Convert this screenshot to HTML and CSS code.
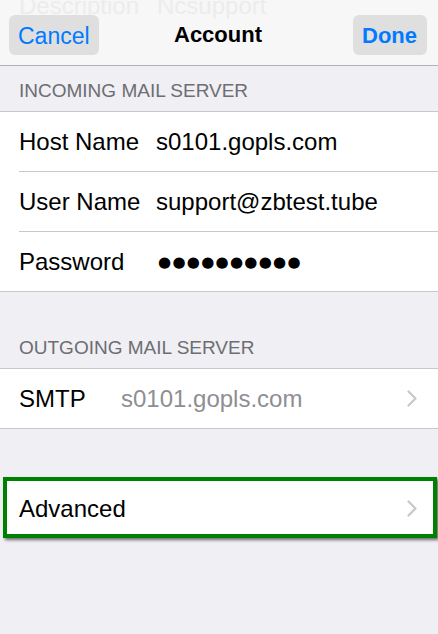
FILE: index.html
```html
<!DOCTYPE html>
<html>
<head>
<meta charset="utf-8">
<link rel="stylesheet" href="styles.css">
</head>
<body>
<div class="screen">
  <header class="nav">
    <div class="ghost"><span class="ghost-label">Description</span><span>Ncsupport</span></div>
    <div class="nav-bar">
      <button class="nav-btn nav-cancel">Cancel</button>
      <div class="nav-title">Account</div>
      <button class="nav-btn nav-done">Done</button>
    </div>
  </header>

  <div class="section-header">INCOMING MAIL SERVER</div>
  <div class="group">
    <div class="row"><span class="label">Host Name</span><span class="value">s0101.gopls.com</span></div>
    <div class="row"><span class="label">User Name</span><span class="value">support@zbtest.tube</span></div>
    <div class="row"><span class="label">Password</span><span class="value dots">●●●●●●●●●●</span></div>
  </div>

  <div class="section-header tall">OUTGOING MAIL SERVER</div>
  <div class="group">
    <div class="row row-link"><span class="label short">SMTP</span><span class="value muted">s0101.gopls.com</span>
      <svg class="chev" width="10" height="17" viewBox="0 0 10 17"><path d="M1.5 1.5 L8.5 8.5 L1.5 15.5" fill="none" stroke="#c7c7cc" stroke-width="2.2" stroke-linecap="round" stroke-linejoin="round"/></svg>
    </div>
  </div>

  <div class="advanced">
    <span class="adv-label">Advanced</span>
    <svg class="chev" width="10" height="17" viewBox="0 0 10 17"><path d="M1.5 1.5 L8.5 8.5 L1.5 15.5" fill="none" stroke="#c7c7cc" stroke-width="2.2" stroke-linecap="round" stroke-linejoin="round"/></svg>
  </div>
</div>
</body>
</html>
```
FILE: styles.css
```css
html, body {
  margin: 0;
  padding: 0;
  background: #efeff4;
}
body {
  font-family: "Liberation Sans", Arial, sans-serif;
  color: #000;
}
.screen {
  width: 438px;
  min-height: 634px;
  background: #efeff4;
  overflow: hidden;
}
.nav {
  position: relative;
  height: 65px;
  background: #f7f7f7;
  border-bottom: 1px solid #b2b2b2;
  overflow: hidden;
}
.ghost {
  position: absolute;
  top: -6px;
  left: 19px;
  display: flex;
  font-size: 24px;
  line-height: 24px;
  color: #ececec;
}
.ghost-label {
  width: 138px;
}
.nav-bar {
  position: relative;
  display: grid;
  grid-template-columns: 1fr auto 1fr;
  align-items: center;
  padding: 14px 11px 0 9px;
}
.nav-btn {
  height: 40px;
  border: none;
  border-radius: 6px;
  background: #dfdfdf;
  color: #007aff;
  font-family: "Liberation Sans", Arial, sans-serif;
  font-size: 23px;
  line-height: 42px;
  padding: 0 9px;
  margin: 0;
}
.nav-cancel {
  justify-self: start;
}
.nav-done {
  justify-self: end;
  font-weight: bold;
  font-size: 22px;
  padding: 0 10px 0 9px;
}
.nav-title {
  font-size: 22px;
  font-weight: bold;
  line-height: 42px;
}
.section-header {
  height: 45px;
  box-sizing: border-box;
  display: flex;
  align-items: flex-end;
  padding: 0 19px 11px;
  font-size: 19px;
  line-height: 19px;
  color: #6d6d72;
}
.section-header.tall {
  height: 76px;
}
.group {
  background: #fff;
  border-top: 1px solid #c8c7cc;
  border-bottom: 1px solid #c8c7cc;
  padding-left: 19px;
}
.row {
  height: 59px;
  display: flex;
  align-items: center;
  border-bottom: 1px solid #c8c7cc;
  font-size: 24px;
}
.row:last-child {
  border-bottom: none;
}
.label {
  width: 137px;
  flex: none;
}
.label.short {
  width: 102px;
}
.value {
  flex: 1;
}
.muted {
  color: #8e8e93;
}
.dots {
  font-family: "DejaVu Sans", sans-serif;
  font-size: 15px;
  letter-spacing: 1.3px;
  padding-left: 2px;
}
.row-link {
  padding-right: 21px;
}
.chev {
  flex: none;
  display: block;
}
.advanced {
  margin: 48px 1px 0 3px;
  height: 51px;
  border: 4px solid #008000;
  background: #fff;
  box-shadow: 2px 2px 3px rgba(0, 0, 0, 0.55);
  display: flex;
  align-items: center;
  padding: 2px 16px 0 12px;
  font-size: 24px;
}
.adv-label {
  flex: 1;
}
```
